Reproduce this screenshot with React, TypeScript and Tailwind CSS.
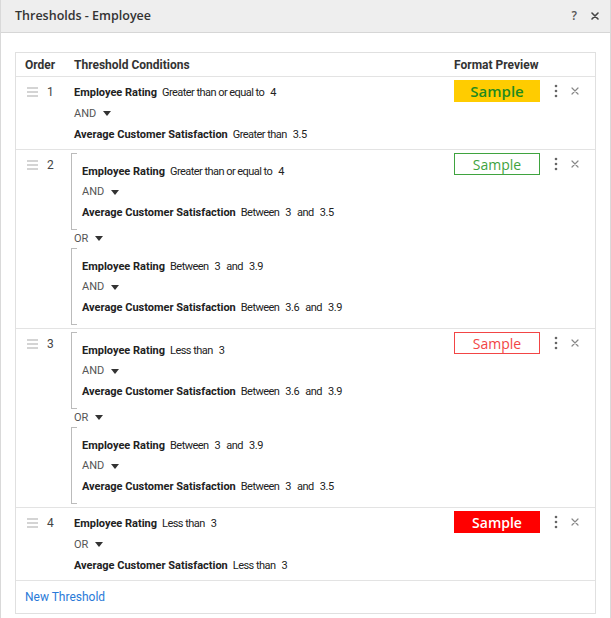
import React from "react";

type Cond = { field: string; op: string; vals: string[] };

const body = { fontFamily: 'Roboto, "Liberation Sans", Arial, sans-serif' };
const narrow: React.CSSProperties = { fontFamily: 'Roboto, "Liberation Sans", Arial, sans-serif' };

function Condition({ c }: { c: Cond }) {
  return (
    <div className="h-[18px] flex items-center text-[11px] text-[#222] whitespace-nowrap">
      <span className="font-bold">{c.field}</span>
      <span className="ml-[5px] text-[11px] tracking-[-0.55px]" style={narrow}>{c.op}</span>
      {c.vals.map((v, i) => (
        <React.Fragment key={i}>
          {i > 0 && <span className="ml-[6px] text-[11px] tracking-[-0.55px]" style={narrow}>and</span>}
          <span className="ml-[6px] text-[11px] tracking-[-0.4px]" style={narrow}>{v}</span>
        </React.Fragment>
      ))}
    </div>
  );
}

function Connector({ label, h }: { label: string; h: string }) {
  return (
    <div className={`${h} flex items-center text-[11px] text-[#555]`}>
      <span>{label}</span>
      <svg width="8" height="6" viewBox="0 0 8 6" className="ml-[7px]">
        <path d="M0 0 L8 0 L4 5 Z" fill="#333" />
      </svg>
    </div>
  );
}

function Group({ a, conn, b }: { a: Cond; conn: string; b: Cond }) {
  return (
    <div className="flex">
      <div className="w-[6px] border-y border-l border-[#bbb]" />
      <div className="ml-[5px] pt-[10px] pb-[8px] flex flex-col">
        <Condition c={a} />
        <Connector label={conn} h="h-[23px]" />
        <Condition c={b} />
      </div>
    </div>
  );
}

function Handle() {
  return (
    <div className="flex flex-col gap-[2px] w-[11px]">
      <div className="h-[2px] bg-[#d4d4d4]" />
      <div className="h-[2px] bg-[#d4d4d4]" />
      <div className="h-[2px] bg-[#d4d4d4]" />
    </div>
  );
}

function Kebab() {
  return (
    <svg width="4" height="14" viewBox="0 0 4 14">
      <circle cx="2" cy="2" r="1.3" fill="#666" />
      <circle cx="2" cy="7" r="1.3" fill="#666" />
      <circle cx="2" cy="12" r="1.3" fill="#666" />
    </svg>
  );
}

function Close({ size = 8, color = "#888", w = 1.2 }: { size?: number; color?: string; w?: number }) {
  return (
    <svg width={size} height={size} viewBox="0 0 8 8">
      <path d="M1 1 L7 7 M7 1 L1 7" stroke={color} strokeWidth={w} strokeLinecap="round" />
    </svg>
  );
}

function Sample({ kind }: { kind: "yellow" | "green" | "redOutline" | "red" }) {
  const cls =
    kind === "yellow"
      ? "bg-[#ffcc00] text-[#1f8a1f] font-semibold text-[15px]"
      : kind === "green"
      ? "border border-[#3fa33f] text-[#3fa33f] text-[14px]"
      : kind === "redOutline"
      ? "border border-[#f24545] text-[#f24545] text-[14px]"
      : "bg-[#ff0000] text-white font-semibold text-[14px]";
  return (
    <div
      className={`w-[86px] h-[22px] flex items-center justify-center ${cls}`}
      style={{ fontFamily: '"Open Sans", sans-serif' }}
    >
      Sample
    </div>
  );
}

function Row({
  n,
  kind,
  children,
  last,
  pt,
  pb,
}: {
  n: number;
  kind: "yellow" | "green" | "redOutline" | "red";
  children: React.ReactNode;
  last?: boolean;
  pt: string;
  pb: string;
}) {
  return (
    <div className={`flex ${last ? "" : "border-b border-[#e3e3e3]"}`}>
      <div className="w-[58px] flex items-start pt-[8px] h-fit">
        <div className="h-[14px] flex items-center ml-[11px]">
          <Handle />
          <span className="ml-[9px] text-[12px] text-[#444]" style={body}>
            {n}
          </span>
        </div>
      </div>
      <div className={`flex-1 flex flex-col ${pt} ${pb}`} style={body}>
        {children}
      </div>
      <div className="w-[141px] pt-[3px] flex items-start">
        <Sample kind={kind} />
        <div className="h-[22px] flex items-center ml-[14px]">
          <Kebab />
        </div>
        <div className="h-[22px] flex items-center ml-[13px]">
          <Close />
        </div>
      </div>
    </div>
  );
}

const ER = "Employee Rating";
const ACS = "Average Customer Satisfaction";

export default function App() {
  return (
    <div className="w-[611px] h-[618px] bg-white overflow-hidden">
      <div className="w-[611px] h-[640px] border-x border-[#d9d9d9] bg-white">
        <div className="h-[33px] bg-[#eeeeee] border-b border-[#d6d6d6] flex items-center pl-[14px] pr-[11px]">
          <span
            className="text-[12.5px] font-semibold text-[#333]"
            style={{ fontFamily: '"Open Sans", sans-serif' }}
          >
            Thresholds - Employee
          </span>
          <span
            className="ml-auto text-[12px] text-[#555] font-semibold"
            style={{ fontFamily: '"Open Sans", sans-serif' }}
          >
            ?
          </span>
          <div className="ml-[14px] flex items-center">
            <Close size={8} color="#444" w={1.6} />
          </div>
        </div>
        <div className="pt-[19px] px-[14px]">
          <div className="border border-[#e0e0e0]">
            <div
              className="h-[24px] border-b border-[#e3e3e3] flex items-center text-[12px] font-bold text-[#333]"
              style={body}
            >
              <div className="w-[58px] pl-[9px]">Order</div>
              <div className="flex-1">Threshold Conditions</div>
              <div className="w-[141px]">Format Preview</div>
            </div>

            <Row n={1} kind="yellow" pt="pt-[7px]" pb="pb-[5px]">
              <Condition c={{ field: ER, op: "Greater than or equal to", vals: ["4"] }} />
              <Connector label="AND" h="h-[24px]" />
              <Condition c={{ field: ACS, op: "Greater than", vals: ["3.5"] }} />
            </Row>

            <Row n={2} kind="green" pt="pt-[3px]" pb="pb-[3px]">
              <div className="ml-[-3px]">
                <Group
                  a={{ field: ER, op: "Greater than or equal to", vals: ["4"] }}
                  conn="AND"
                  b={{ field: ACS, op: "Between", vals: ["3", "3.5"] }}
                />
              </div>
              <Connector label="OR" h="h-[18px]" />
              <div className="ml-[-3px]">
                <Group
                  a={{ field: ER, op: "Between", vals: ["3", "3.9"] }}
                  conn="AND"
                  b={{ field: ACS, op: "Between", vals: ["3.6", "3.9"] }}
                />
              </div>
            </Row>

            <Row n={3} kind="redOutline" pt="pt-[3px]" pb="pb-[3px]">
              <div className="ml-[-3px]">
                <Group
                  a={{ field: ER, op: "Less than", vals: ["3"] }}
                  conn="AND"
                  b={{ field: ACS, op: "Between", vals: ["3.6", "3.9"] }}
                />
              </div>
              <Connector label="OR" h="h-[18px]" />
              <div className="ml-[-3px]">
                <Group
                  a={{ field: ER, op: "Between", vals: ["3", "3.9"] }}
                  conn="AND"
                  b={{ field: ACS, op: "Between", vals: ["3", "3.5"] }}
                />
              </div>
            </Row>

            <Row n={4} kind="red" pt="pt-[7px]" pb="pb-[5px]" last>
              <Condition c={{ field: ER, op: "Less than", vals: ["3"] }} />
              <Connector label="OR" h="h-[24px]" />
              <Condition c={{ field: ACS, op: "Less than", vals: ["3"] }} />
            </Row>

            <div className="h-[33px] border-t border-[#e3e3e3] flex items-center pl-[9px]">
              <span className="text-[12px] text-[#2a7ad8]" style={body}>
                New Threshold
              </span>
            </div>
          </div>
        </div>
      </div>
    </div>
  );
}
